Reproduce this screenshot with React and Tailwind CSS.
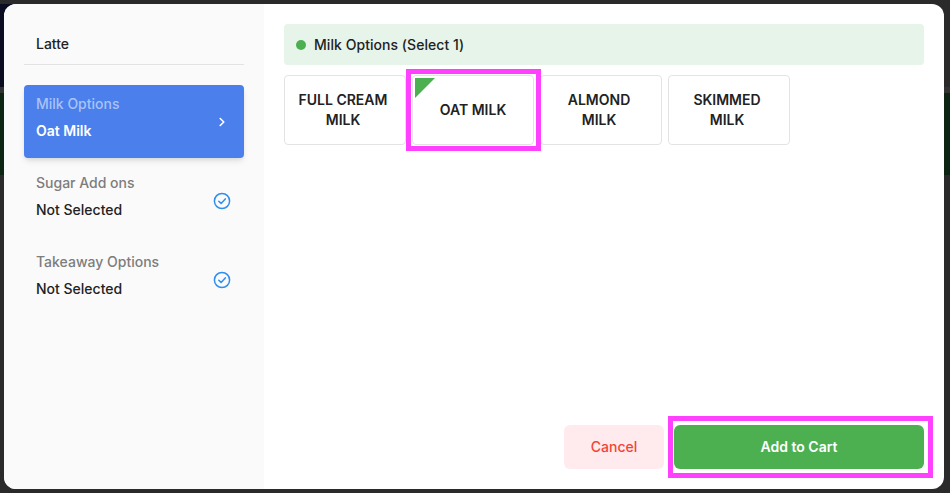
const options = [
  { name: 'FULL CREAM MILK', selected: false },
  { name: 'OAT MILK', selected: true },
  { name: 'ALMOND MILK', selected: false },
  { name: 'SKIMMED MILK', selected: false },
]

const CheckIcon = () => (
  <svg width="18" height="18" viewBox="0 0 18 18" fill="none" stroke="#2f8fef" strokeWidth="1.5" strokeLinecap="round" strokeLinejoin="round">
    <circle cx="9" cy="9" r="7.6" />
    <path d="M5.8 9.2l2.3 2.2 4.2-4.5" />
  </svg>
)

const Step = ({ title, value }) => (
  <div className="flex items-center justify-between h-[73px] pl-3 pr-[13px] mb-[6px]">
    <div className="pb-2">
      <div className="text-[14px] leading-[20px] font-medium text-[#7d7d7d]">{title}</div>
      <div className="mt-[7px] text-[14px] leading-[20px] font-medium text-[#222]">{value}</div>
    </div>
    <CheckIcon />
  </div>
)

const App = () => {
  return (
    <div className="relative w-[950px] h-[493px] bg-[#2a2a2a] pt-1 overflow-hidden font-['Inter',sans-serif]">
      {/* page behind the dialog */}
      <div className="flex h-[83px]">
        <div className="w-[200px] bg-[#0b0b22]" />
      </div>
      <div className="h-[6px] bg-[#333333]" />
      <div className="h-[82px] bg-[#0e2412]" />

      {/* dialog */}
      <div className="absolute top-1 left-1 flex w-[940px] h-[485px] rounded-xl overflow-hidden bg-white">
        <div className="w-[260px] shrink-0 bg-[#fafafa] px-5">
          <div className="h-[61px] pt-[30px] pl-3 border-b border-[#e3e3e3] text-[14px] leading-[20px] font-medium text-[#222]">
            Latte
          </div>
          <div className="mt-5 h-[73px] mb-[6px] rounded bg-[#4b7fec] shadow-md flex items-center justify-between pl-3 pr-[16px]">
            <div className="pb-2">
              <div className="text-[14px] leading-[20px] font-medium text-[#a9c3f6]">Milk Options</div>
              <div className="mt-[7px] text-[14px] leading-[20px] font-semibold text-white">Oat Milk</div>
            </div>
            <svg width="12" height="12" viewBox="0 0 12 12" fill="none" stroke="#fff" strokeWidth="1.6" strokeLinecap="round" strokeLinejoin="round">
              <path d="M4.2 2.5L7.8 6l-3.6 3.5" />
            </svg>
          </div>
          <Step title="Sugar Add ons" value="Not Selected" />
          <Step title="Takeaway Options" value="Not Selected" />
        </div>
        <div className="flex-1 flex flex-col p-5">
          <div className="h-[41px] rounded bg-[#e6f4ea] flex items-center pl-3 gap-2 text-[14px] font-medium tracking-[0.05px] text-[#222]">
            <span className="w-[10px] h-[10px] rounded-full bg-[#4caf50]" />
            Milk Options (Select 1)
          </div>
          <div className="flex gap-[6px] mt-[10px]">
            {options.map((o) => (
              <div
                key={o.name}
                className={
                  o.selected
                    ? 'relative z-10 w-[122px] h-[70px] shrink-0 bg-white border border-[#e3e3e3] rounded flex items-center justify-center text-center text-[14px] leading-[20px] font-semibold text-[#222] px-3'
                    : 'w-[122px] h-[70px] shrink-0 bg-white border border-[#e3e3e3] rounded flex items-center justify-center text-center text-[14px] leading-[20px] font-semibold text-[#222] pl-3 pr-4'
                }
              >
                {o.selected && (
                  <>
                    <span className="absolute top-[2px] left-[2px] w-0 h-0 border-t-[20px] border-r-[20px] border-t-[#4caf50] border-r-transparent" />
                    <span className="absolute -top-[7px] -bottom-[7px] -left-[7px] -right-[8px] border-[5px] border-[#ff40ff]" />
                  </>
                )}
                <span>{o.name}</span>
              </div>
            ))}
          </div>
          <div className="mt-auto flex justify-end gap-[10px]">
            <button className="w-[100px] h-[44px] pb-px rounded-md bg-[#ffebee] text-[14px] font-medium text-[#f44336]">Cancel</button>
            <button className="relative w-[250px] h-[44px] pb-px rounded-md bg-[#4caf50] text-[14px] font-semibold text-white">
              Add to Cart
              <span className="absolute -top-[9px] -bottom-[9px] -left-[6px] -right-[9px] border-[5px] border-[#ff40ff]" />
            </button>
          </div>
        </div>
      </div>
    </div>
  )
}

export default App
